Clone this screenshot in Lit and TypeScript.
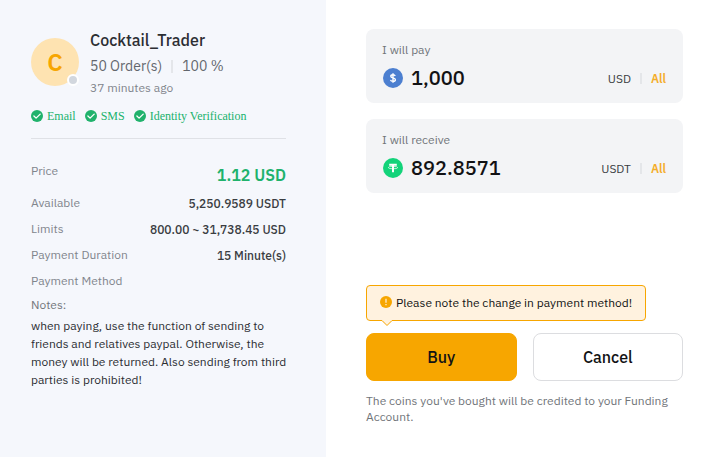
import { LitElement, html, css, svg } from "lit";
import { customElement, property } from "lit/decorators.js";

const checkIcon = html`<svg class="check" viewBox="0 0 12 12" aria-hidden="true">
  <circle cx="6" cy="6" r="6" fill="#20b26c" />
  <path d="M2.900 6 5.100 8.100 9.200 4.100" fill="none" stroke="#fff" stroke-width="1.300" stroke-linecap="round" stroke-linejoin="round" />
</svg>`;

const coinArt = {
  usd: svg`<circle cx="10" cy="10" r="10" fill="#4c7fd0" />
    <path d="M12.2 7.9C11.9 7.1 11.1 6.7 10 6.7 8.7 6.7 7.8 7.3 7.8 8.3 7.8 10.5 12.4 9.3 12.4 11.7 12.4 12.7 11.4 13.3 10 13.3 8.7 13.3 7.8 12.8 7.5 11.9M10 5.2V14.8" fill="none" stroke="#fff" stroke-width="1.4" />`,
  usdt: svg`<circle cx="10" cy="10" r="10" fill="#13d37a" />
    <path d="M6.2 5.8H13.8V7.7H11V14.2H9V7.7H6.2Z" fill="#fff" />
    <ellipse cx="10" cy="9.6" rx="4.7" ry="1.2" fill="none" stroke="#fff" stroke-width=".7" />`,
};

@customElement("amount-card")
class AmountCard extends LitElement {
  @property() label = "";
  @property() value = "";
  @property() unit = "";
  @property() coin: "usd" | "usdt" = "usd";

  static styles = css`
    :host {
      display: block;
      padding: 12px 17px 10px 16px;
      border-radius: 8px;
      background: #f3f4f6;
    }
    .label {
      display: block;
      margin-bottom: 4px;
      font-size: 12px;
      line-height: 18px;
      color: #71757a;
    }
    .row {
      display: flex;
      align-items: center;
      height: 30px;
    }
    .coin {
      flex: none;
      width: 20px;
      height: 20px;
      margin: 0 8px 0 1px;
    }
    .amount {
      flex: 1;
      min-width: 0;
      padding: 0;
      border: 0;
      outline: 0;
      background: none;
      font: inherit;
      font-size: 20px;
      font-weight: 500;
      line-height: 28px;
      color: #121214;
    }
    .unit {
      font-size: 12px;
      color: #3a3d42;
    }
    .bar {
      width: 2px;
      height: 11px;
      margin: 0 9px;
      background: #e4e6e9;
    }
    .all {
      padding: 0;
      border: 0;
      background: none;
      font: inherit;
      font-size: 12px;
      font-weight: 600;
      color: #f3ad29;
      cursor: pointer;
    }
  `;

  render() {
    return html`
      <label class="label" for="amount">${this.label}</label>
      <div class="row">
        <svg class="coin" viewBox="0 0 20 20" aria-hidden="true">${coinArt[this.coin]}</svg>
        <input class="amount" id="amount" type="text" inputmode="decimal" .value=${this.value} />
        <span class="unit">${this.unit}</span>
        <span class="bar"></span>
        <button class="all" type="button">All</button>
      </div>
    `;
  }
}

@customElement("app-root")
class AppRoot extends LitElement {
  static styles = css`
    :host {
      display: grid;
      grid-template-columns: minmax(0, 326fr) minmax(0, 388fr);
      min-height: 100vh;
      background: #fff;
      font-family: "IBM Plex Sans", Inter, sans-serif;
      font-size: 12px;
      color: #121214;
    }
    * {
      box-sizing: border-box;
    }
    .seller {
      padding: 28px 40px 28px 31px;
      background: #f5f7fc;
    }
    .profile {
      display: flex;
      align-items: center;
      gap: 11px;
    }
    .avatar {
      position: relative;
      flex: none;
      width: 48px;
      height: 48px;
      border-radius: 50%;
      background: #fee3b1;
      font-size: 24px;
      font-weight: 600;
      line-height: 48px;
      text-align: center;
      color: #f7a600;
    }
    .status {
      position: absolute;
      right: 0;
      bottom: 0;
      width: 12px;
      height: 12px;
      border: 2px solid #fff;
      border-radius: 50%;
      background: #d2d7de;
    }
    .name {
      margin: 0;
      font-size: 16px;
      font-weight: 500;
      line-height: 24px;
      color: #2c2e33;
    }
    .stats {
      display: flex;
      align-items: center;
      font-size: 14px;
      line-height: 28px;
      color: #62666c;
    }
    .bar {
      width: 2px;
      height: 13px;
      margin: 0 9px;
      background: #e4e6ea;
    }
    .seen {
      line-height: 16px;
      color: #81858c;
    }
    .badges {
      display: flex;
      gap: 9px;
      margin: 12px 0 0;
      padding: 0 0 14px;
      border-bottom: 1px solid #dfe1e6;
      list-style: none;
      font-family: "Liberation Serif", serif;
      line-height: 16px;
      color: #20b26c;
    }
    .badge {
      display: flex;
      align-items: center;
      gap: 4px;
      white-space: nowrap;
    }
    .check {
      width: 12px;
      height: 12px;
    }
    .facts {
      display: grid;
      gap: 8px;
      margin: 24px 0 8px;
    }
    .fact {
      display: flex;
      justify-content: space-between;
    }
    .term {
      line-height: 16px;
      color: #81858c;
    }
    .detail {
      margin: 0;
      font-weight: 500;
      line-height: 18px;
      color: #3a3d42;
    }
    .price {
      font-size: 16px;
      font-weight: 600;
      line-height: 24px;
      color: #20b26c;
    }
    .notes-title {
      margin: 0 0 4px;
      font-size: 12px;
      font-weight: 400;
      line-height: 16px;
      color: #71757a;
    }
    .notes {
      margin: 0 -8px 0 0;
      line-height: 18px;
      color: #2c2e33;
    }
    .order {
      display: flex;
      flex-direction: column;
      gap: 16px;
      padding: 29px 31px 32px 40px;
    }
    .tip {
      position: relative;
      display: flex;
      align-items: center;
      align-self: flex-start;
      gap: 4px;
      margin-top: 76px;
      padding: 8px 13px;
      border: 1px solid #f7a600;
      border-radius: 4px;
      background: #fff2df;
      line-height: 18px;
    }
    .tip-icon {
      flex: none;
      width: 12px;
      height: 12px;
      margin-bottom: 2px;
    }
    .tip-arrow {
      position: absolute;
      top: 100%;
      left: 14px;
      width: 12px;
      height: 6px;
      overflow: visible;
    }
    .actions {
      display: grid;
      grid-template-columns: 1fr 1fr;
      gap: 16px;
      margin-top: -4px;
    }
    .action {
      height: 48px;
      border: 1px solid #dcdde0;
      border-radius: 8px;
      background: #fff;
      font: inherit;
      font-size: 16px;
      font-weight: 500;
      color: #121214;
      cursor: pointer;
    }
    .buy {
      border-color: #f7a600;
      background: #f7a600;
    }
    .hint {
      margin: -4px 0 0;
      line-height: 16px;
      color: #71757a;
    }
  `;

  private facts = [
    ["Available", "5,250.9589 USDT"],
    ["Limits", "800.00 ~ 31,738.45 USD"],
    ["Payment Duration", "15 Minute(s)"],
  ];

  render() {
    return html`
      <section class="seller">
        <header class="profile">
          <div class="avatar">C<span class="status"></span></div>
          <div>
            <h1 class="name">Cocktail_Trader</h1>
            <div class="stats"><span>50 Order(s)</span><span class="bar"></span><span>100 %</span></div>
            <div class="seen">37 minutes ago</div>
          </div>
        </header>
        <ul class="badges">
          ${["Email", "SMS", "Identity Verification"].map((text) => html`<li class="badge">${checkIcon}${text}</li>`)}
        </ul>
        <dl class="facts">
          <div class="fact"><dt class="term">Price</dt><dd class="detail price">1.12 USD</dd></div>
          ${this.facts.map(
            ([term, detail]) => html`<div class="fact"><dt class="term">${term}</dt><dd class="detail">${detail}</dd></div>`
          )}
          <div class="fact"><dt class="term">Payment Method</dt></div>
        </dl>
        <h2 class="notes-title">Notes:</h2>
        <p class="notes">
          when paying, use the function of sending to friends and relatives paypal. Otherwise, the money will be
          returned. Also sending from third parties is prohibited!
        </p>
      </section>
      <section class="order">
        <amount-card label="I will pay" value="1,000" unit="USD" coin="usd"></amount-card>
        <amount-card label="I will receive" value="892.8571" unit="USDT" coin="usdt"></amount-card>
        <div class="tip" role="status">
          <svg class="tip-icon" viewBox="0 0 12 12" aria-hidden="true">
            <circle cx="6" cy="6" r="6" fill="#f7a600" />
            <path d="M6 2.8V6.8M6 8.1V9.3" stroke="#fff2df" stroke-width="1.2" />
          </svg>
          <span>Please note the change in payment method!</span>
          <svg class="tip-arrow" viewBox="0 0 12 6" aria-hidden="true">
            <path d="M0 -1H12V.5L6 5.500 0 .5Z" fill="#fff2df" />
            <path d="M0 .5H1L6 5.500 11 .5H12" fill="none" stroke="#f7a600" />
          </svg>
        </div>
        <div class="actions">
          <button class="action buy" type="button">Buy</button>
          <button class="action" type="button">Cancel</button>
        </div>
        <p class="hint">The coins you've bought will be credited to your Funding Account.</p>
      </section>
    `;
  }
}
